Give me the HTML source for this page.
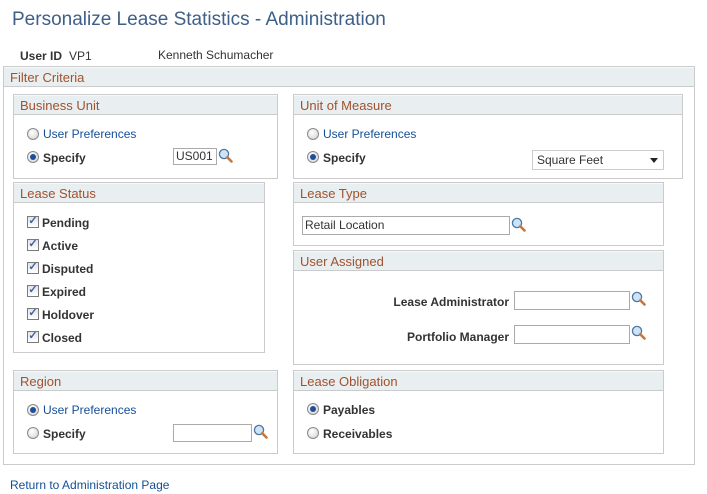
<!DOCTYPE html>
<html><head><meta charset="utf-8"><style>
body{margin:0;width:707px;height:494px;background:#fff;font-family:"Liberation Sans",Arial,sans-serif;font-size:12px;color:#333;position:relative;overflow:hidden}
.a{position:absolute}
.box{position:absolute;border:1px solid #cbcbcb;box-sizing:border-box;background:#fff}
.hd{position:absolute;left:0;right:0;top:0;height:20px;background:#e9eef0;border-bottom:1px solid #cbcbcb;border-top:1px solid #f8f8f8;color:#a0522d;font-size:13px;line-height:19px;padding-left:6px;box-sizing:border-box}
.lnk{color:#134f99}
.b{font-weight:bold;color:#333}
.rad{position:absolute;width:10px;height:10px;border-radius:50%;border:1px solid #8a8a8a;background:radial-gradient(circle at 40% 35%,#fff,#d0d0d0)}
.rad.on::after{content:"";position:absolute;left:2px;top:2px;width:6px;height:6px;border-radius:50%;background:#1d4f9a}
.cb{position:absolute;width:10px;height:10px;border:1px solid #7a7a7a;background:linear-gradient(#e4e4e4,#fff);font-size:11px;line-height:9px;color:#3f5fa8;text-align:center;font-weight:bold}
.inp{position:absolute;border:1px solid #aaa;height:17px;box-sizing:border-box;font-size:12px;line-height:15px;padding-left:2px;background:#fff}
.mg{position:absolute;width:15px;height:15px}
</style></head><body>
<div class="a" style="left:12px;top:9px;font-size:19px;color:#3e5f8a">Personalize Lease Statistics - Administration</div>
<div class="a b" style="left:20px;top:49px">User ID</div>
<div class="a" style="left:69px;top:49px">VP1</div>
<div class="a" style="left:158px;top:48px">Kenneth Schumacher</div>

<div class="box" style="left:3px;top:66px;width:692px;height:399px"><div class="hd">Filter Criteria</div></div>

<svg width="0" height="0" style="position:absolute"><defs><symbol id="m" viewBox="0 0 15 15"><circle cx="6" cy="6" r="4.6" fill="#cfe3f5" stroke="#4a78a8" stroke-width="1.3"/><path d="M9.3 9.3L13.5 13.5" stroke="#c8783a" stroke-width="2.6" stroke-linecap="round"/></symbol></defs></svg>

<div class="box" style="left:13px;top:94px;width:265px;height:85px"><div class="hd">Business Unit</div></div>
<div class="rad" style="left:27px;top:128px"></div><div class="a lnk" style="left:43px;top:127px">User Preferences</div>
<div class="rad on" style="left:27px;top:151px"></div><div class="a b" style="left:43px;top:151px">Specify</div>
<div class="inp" style="left:173px;top:148px;width:44px">US001</div><svg class="mg" style="left:218px;top:148px"><use href="#m"/></svg>

<div class="box" style="left:293px;top:94px;width:390px;height:85px"><div class="hd">Unit of Measure</div></div>
<div class="rad" style="left:307px;top:128px"></div><div class="a lnk" style="left:323px;top:127px">User Preferences</div>
<div class="rad on" style="left:307px;top:151px"></div><div class="a b" style="left:323px;top:151px">Specify</div>
<div class="inp" style="left:532px;top:150px;width:132px;height:20px;line-height:18px;padding-left:4px;border-color:#ccc">Square Feet<span style="position:absolute;right:5px;top:7px;border:4px solid transparent;border-top:5px solid #222;border-bottom:0"></span></div>

<div class="box" style="left:13px;top:182px;width:252px;height:171px"><div class="hd">Lease Status</div></div>
<div class="cb" style="left:27px;top:216px">✓</div><div class="a b" style="left:42px;top:216px">Pending</div>
<div class="cb" style="left:27px;top:239px">✓</div><div class="a b" style="left:42px;top:239px">Active</div>
<div class="cb" style="left:27px;top:262px">✓</div><div class="a b" style="left:42px;top:262px">Disputed</div>
<div class="cb" style="left:27px;top:285px">✓</div><div class="a b" style="left:42px;top:285px">Expired</div>
<div class="cb" style="left:27px;top:308px">✓</div><div class="a b" style="left:42px;top:308px">Holdover</div>
<div class="cb" style="left:27px;top:331px">✓</div><div class="a b" style="left:42px;top:331px">Closed</div>

<div class="box" style="left:293px;top:182px;width:371px;height:64px"><div class="hd">Lease Type</div></div>
<div class="inp" style="left:302px;top:216px;width:208px;height:19px;line-height:17px">Retail Location</div><svg class="mg" style="left:511px;top:217px"><use href="#m"/></svg>

<div class="box" style="left:293px;top:250px;width:371px;height:115px"><div class="hd">User Assigned</div></div>
<div class="a b" style="left:380px;top:295px;width:129px;text-align:right">Lease Administrator</div>
<div class="inp" style="left:514px;top:291px;width:116px;height:19px"></div><svg class="mg" style="left:631px;top:291px"><use href="#m"/></svg>
<div class="a b" style="left:380px;top:330px;width:129px;text-align:right">Portfolio Manager</div>
<div class="inp" style="left:514px;top:325px;width:116px;height:19px"></div><svg class="mg" style="left:631px;top:325px"><use href="#m"/></svg>

<div class="box" style="left:13px;top:370px;width:265px;height:84px"><div class="hd">Region</div></div>
<div class="rad on" style="left:27px;top:404px"></div><div class="a lnk" style="left:43px;top:403px">User Preferences</div>
<div class="rad" style="left:27px;top:427px"></div><div class="a b" style="left:43px;top:427px">Specify</div>
<div class="inp" style="left:173px;top:424px;width:79px;height:18px"></div><svg class="mg" style="left:253px;top:424px"><use href="#m"/></svg>

<div class="box" style="left:293px;top:370px;width:371px;height:84px"><div class="hd">Lease Obligation</div></div>
<div class="rad on" style="left:307px;top:403px"></div><div class="a b" style="left:323px;top:403px">Payables</div>
<div class="rad" style="left:307px;top:427px"></div><div class="a b" style="left:323px;top:427px">Receivables</div>

<div class="a lnk" style="left:10px;top:478px">Return to Administration Page</div>
</body></html>
